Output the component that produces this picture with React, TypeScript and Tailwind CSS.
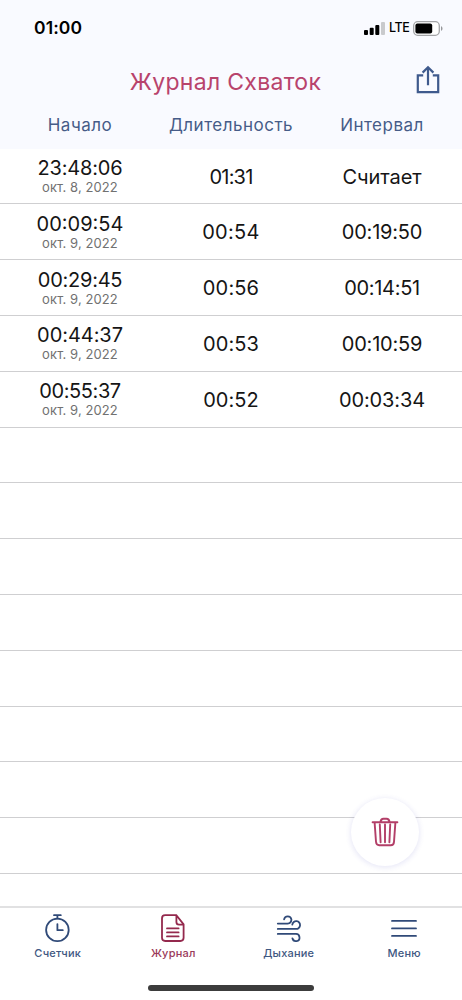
import type { ReactNode } from 'react';

type Entry = {
  start: string;
  date: string;
  duration: string;
  interval: string;
  startClass: string;
  durationClass: string;
  intervalClass: string;
};

const entries: Entry[] = [
  { start: '23:48:06', date: 'окт. 8, 2022', duration: '01:31', interval: 'Считает', startClass: 'tracking-[-0.2px]', durationClass: 'tracking-[-0.8px]', intervalClass: 'tracking-[-0.1px]' },
  { start: '00:09:54', date: 'окт. 9, 2022', duration: '00:54', interval: '00:19:50', startClass: 'tracking-[0px]', durationClass: 'tracking-[0.3px]', intervalClass: 'tracking-[-0.2px]' },
  { start: '00:29:45', date: 'окт. 9, 2022', duration: '00:56', interval: '00:14:51', startClass: 'tracking-[-0.25px]', durationClass: 'tracking-[0.15px]', intervalClass: 'tracking-[-0.3px]' },
  { start: '00:44:37', date: 'окт. 9, 2022', duration: '00:53', interval: '00:10:59', startClass: 'tracking-[-0.05px]', durationClass: 'tracking-[0.05px]', intervalClass: 'tracking-[-0.2px]' },
  { start: '00:55:37', date: 'окт. 9, 2022', duration: '00:52', interval: '00:03:34', startClass: 'tracking-[-0.4px]', durationClass: 'tracking-[0.05px]', intervalClass: 'tracking-[-0.1px]' },
];

const emptyRows = [0, 1, 2, 3, 4, 5, 6, 7];

function StatusBar() {
  return (
    <div className="flex h-[56px] items-center justify-between pr-[19px] pl-[34px]">
      <span className="text-[17.5px] font-semibold tracking-[0.1px] text-black">01:00</span>
      <div className="flex items-center">
        <svg width="21" height="13" viewBox="0 0 21 13">
          <rect x="0" y="8" width="4" height="5" rx="1" />
          <rect x="5.7" y="5.8" width="4" height="7.2" rx="1" />
          <rect x="11.3" y="3" width="4" height="10" rx="1" />
          <rect x="17" y="0" width="4" height="13" rx="1" fill="#c9cacd" />
        </svg>
        <span className="ml-[4px] w-[20px] text-[12.5px] font-medium tracking-[-0.4px] text-black">LTE</span>
        <svg className="ml-[4px]" width="30" height="15" viewBox="0 0 30 15">
          <rect x="0.7" y="0.7" width="25.6" height="13.6" rx="4" fill="#fff" stroke="#a3a4a7" strokeWidth="1.3" />
          <rect x="2.4" y="2.4" width="16.8" height="10.2" rx="2" />
          <path d="M28 5.2c2 .6 2 4 0 4.6z" fill="#97989b" />
        </svg>
      </div>
    </div>
  );
}

function ShareIcon() {
  return (
    <svg width="24" height="29" viewBox="0 0 24 29" fill="none" stroke="#3f5a8d" strokeWidth="2.2">
      <path d="M7.2 10.3H1.8V27.2H22.2V10.3H16.8M12 20.2V2.4M6.6 7.6 12 2.2 17.4 7.6" />
    </svg>
  );
}

function TrashIcon() {
  return (
    <svg width="28" height="30" viewBox="0 0 28 30" fill="none" stroke="#b33f68" strokeWidth="1.9" strokeLinecap="round" strokeLinejoin="round">
      <path d="M1.6 5.2H26.4M9.4 5C9.8 2.6 11 1.7 12.4 1.7H15.6C17 1.7 18.2 2.6 18.6 5M3.6 5.4 5 24.8Q5.3 28.3 8.2 28.3H19.8Q22.7 28.3 23 24.8L24.4 5.4M8.8 7.5 9.6 25.2M14 7.5V25.2M19.2 7.5 18.4 25.2" />
    </svg>
  );
}

const stroke = { fill: 'none', strokeWidth: 1.8, strokeLinecap: 'round', strokeLinejoin: 'round' } as const;

function TimerIcon() {
  return (
    <svg width="28" height="30" viewBox="0 0 28 30" stroke="#304a78" {...stroke}>
      <circle cx="13.4" cy="16.9" r="11.3" />
      <path d="M10 2.2H16.8M13.4 2.4V5.4M13.4 11.1V17.2H18.8" />
    </svg>
  );
}

function JournalIcon() {
  return (
    <svg width="28" height="30" viewBox="0 0 28 30" stroke="#94294d" {...stroke}>
      <path d="M17.4 2.2H6.2Q3 2.2 3 5.4V24.8Q3 28 6.2 28H21.4Q24.6 28 24.6 24.8V11.4ZM17.4 2.2V9Q17.4 11.6 20 11.6H24.4M8 15.4H19.6M8 19.4H19.6M8 23.4H19.6" />
    </svg>
  );
}

function WindIcon() {
  return (
    <svg width="28" height="30" viewBox="0 0 28 30" stroke="#304a78" {...stroke}>
      <path d="M2.8 10.6H12.6Q16.4 10 16.4 6.4A3.7 3.7 0 0 0 9.1 6.4M2.8 15.9H20.6A3.9 3.9 0 1 0 17.3 11.6M2.8 20.9H20.6A3.6 3.6 0 1 1 17.4 25.3" />
    </svg>
  );
}

function MenuIcon() {
  return (
    <svg width="28" height="30" viewBox="0 0 28 30" stroke="#304a78" {...stroke}>
      <path d="M2 7.9H26M2 15.4H26M2 22.9H26" />
    </svg>
  );
}

function Tab({ icon, label, active }: { icon: ReactNode; label: string; active?: boolean }) {
  return (
    <div className="flex flex-1 flex-col items-center pt-[5px]">
      {icon}
      <span className={`mt-[2px] text-[11px] leading-[16px] font-medium tracking-[0.2px] ${active ? 'text-[#9a3a5a]' : 'text-[#3f5882]'}`}>{label}</span>
    </div>
  );
}

export default function App() {
  return (
    <div className="relative flex h-[1000px] w-[462px] flex-col overflow-hidden bg-white font-['Inter','Liberation_Sans',sans-serif]">
      <header className="h-[148.7px] shrink-0 bg-[#f9faff]">
        <StatusBar />
        <div className="grid h-[50px] grid-cols-[80px_1fr_80px] items-center">
          <h1 className="col-start-2 mt-[2px] pr-[11px] text-center text-[23px] tracking-[0.3px] whitespace-nowrap text-[#b8436c]">Журнал Схваток</h1>
          <button className="mt-[-4px] ml-[34px] w-[24px]" aria-label="Поделиться"><ShareIcon /></button>
        </div>
        <div className="grid grid-cols-[160px_142px_160px] text-center text-[17px] leading-[38px] tracking-[0.5px] whitespace-nowrap text-[#465c88]">
          <span>Начало</span>
          <span>Длительность</span>
          <span>Интервал</span>
        </div>
      </header>

      <main className="min-h-0 flex-1 overflow-hidden">
        {entries.map((e) => (
          <div key={e.start} className="grid h-[55.8px] grid-cols-[160px_142px_160px] items-center border-b border-[#cfcfd1] pt-px text-center text-[20px] text-[#151515]">
            <div>
              <div className={`leading-[22px] ${e.startClass}`}>{e.start}</div>
              <div className="text-[13px] leading-[17px] tracking-[0.1px] text-[#717171]">{e.date}</div>
            </div>
            <div className={e.durationClass}>{e.duration}</div>
            <div className={e.intervalClass}>{e.interval}</div>
          </div>
        ))}
        {emptyRows.map((n) => (
          <div key={n} className="h-[55.8px] border-b border-[#cfcfd1]" />
        ))}
      </main>

      <button className="absolute top-[798px] left-[351px] flex h-[68px] w-[68px] items-center justify-center rounded-full bg-white shadow-[0_1px_5px_1px_rgba(70,70,190,0.12)]" aria-label="Удалить">
        <TrashIcon />
      </button>

      <nav className="flex h-[94px] shrink-0 flex-col items-center border-t-2 border-[#e1e1e2] bg-white">
        <div className="flex w-full">
          <Tab icon={<TimerIcon />} label="Счетчик" />
          <Tab icon={<JournalIcon />} label="Журнал" active />
          <Tab icon={<WindIcon />} label="Дыхание" />
          <Tab icon={<MenuIcon />} label="Меню" />
        </div>
        <div className="mt-auto mb-[9px] h-[6px] w-[166px] rounded-full bg-[#3c3c3c]" />
      </nav>
    </div>
  );
}
